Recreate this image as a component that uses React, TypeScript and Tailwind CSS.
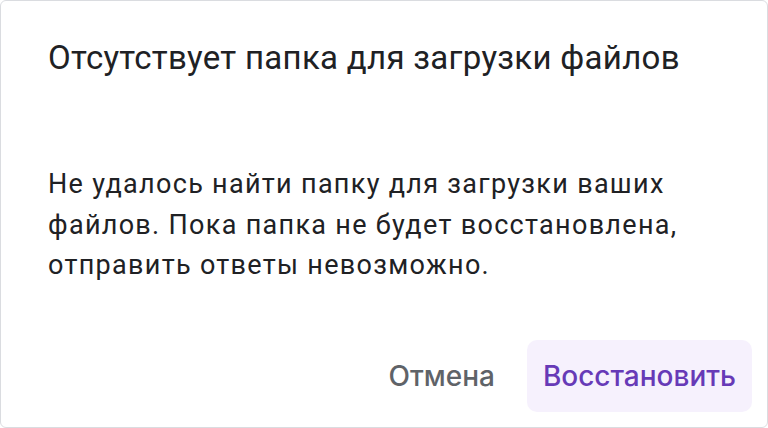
import React from "react";

export default function App() {
  return (
    <div className="w-[768px] h-[428px] bg-white">
      <div className="w-full h-full border border-[#dadce0] rounded-[6px] bg-white flex flex-col" style={{ fontFamily: "Roboto, 'Liberation Sans', sans-serif" }}>
        <div className="pl-[47px] pt-[37px] text-[33px] leading-[40px] tracking-[0.3px] text-[#202124]">
          Отсутствует папка для загрузки файлов
        </div>
        <div className="pl-[47px] pt-[86px] pr-[60px] text-[27px] leading-[40.5px] tracking-[1.3px] text-[#202124]">
          Не удалось найти папку для загрузки ваших файлов. Пока папка не будет восстановлена, отправить ответы невозможно.
        </div>
        <div className="mt-auto flex justify-end items-center gap-[24px] pr-[15px] pb-[15px]">
          <button className="text-[28px] text-[#5f6368] font-medium px-[8px] h-[72px]" style={{ fontFamily: "Inter, Roboto, sans-serif" }}>
            Отмена
          </button>
          <button className="text-[28px] text-[#673ab7] font-medium bg-[#f6f1fd] rounded-[10px] px-[16px] h-[72px]" style={{ fontFamily: "Inter, Roboto, sans-serif" }}>
            Восстановить
          </button>
        </div>
      </div>
    </div>
  );
}
